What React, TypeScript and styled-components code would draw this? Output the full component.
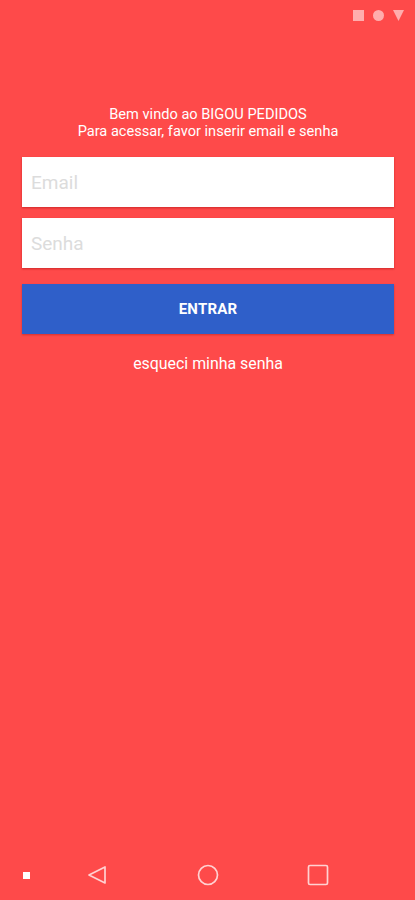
import React, { useState } from "react";
import styled, { createGlobalStyle } from "styled-components";

const GlobalStyle = createGlobalStyle`
  html, body {
    margin: 0;
    padding: 0;
    background: #fe4a4a;
  }
  * {
    box-sizing: border-box;
  }
`;

const Screen = styled.div`
  width: 415px;
  height: 900px;
  background: #fe4a4a;
  display: flex;
  flex-direction: column;
  font-family: Roboto, "Liberation Sans", sans-serif;
`;

const StatusBar = styled.div`
  height: 30px;
  display: flex;
  justify-content: flex-end;
  align-items: center;
  gap: 9px;
  padding: 0 11px 0 0;
`;

const StatusIcon = styled.svg`
  width: 11px;
  height: 11px;
  fill: rgba(255, 255, 255, 0.55);
`;

const Content = styled.div`
  flex: 1;
  display: flex;
  flex-direction: column;
  padding: 76px 21px 0 22px;
`;

const Welcome = styled.p`
  margin: 0 0 17px;
  color: #fff;
  text-align: center;
  font-size: 14.6px;
  line-height: 17px;
`;

const Field = styled.input<{ $gap: number }>`
  width: 100%;
  height: 50px;
  border: none;
  outline: none;
  background: #fff;
  padding: 0 9px;
  font-family: Roboto, "Liberation Sans", sans-serif;
  font-size: 19px;
  color: #333;
  box-shadow: 0 1px 2px rgba(150, 0, 0, 0.45);
  margin-bottom: ${(p) => p.$gap}px;

  &::placeholder {
    color: #dcdcdc;
  }
`;

const Button = styled.button`
  width: 100%;
  height: 50px;
  border: none;
  background: #2f5fc9;
  color: #fff;
  font-family: Roboto, "Liberation Sans", sans-serif;
  font-weight: 700;
  font-size: 15px;
  letter-spacing: 0.2px;
  box-shadow: 0 1px 2px rgba(120, 0, 0, 0.35);
  cursor: pointer;
`;

const Forgot = styled.a`
  margin-top: 20px;
  text-align: center;
  color: #fff;
  font-size: 15.9px;
  line-height: 19px;
  text-decoration: none;
  cursor: pointer;
`;

const NavBar = styled.div`
  height: 50px;
  display: flex;
  align-items: center;
`;

const NavDot = styled.div`
  width: 7px;
  height: 7px;
  background: #fff;
  margin-left: 23px;
  margin-right: 56px;
`;

const NavIcon = styled.svg<{ $mr: number }>`
  width: 22px;
  height: 22px;
  fill: none;
  stroke: rgba(255, 255, 255, 0.75);
  stroke-width: 1.7;
  margin-right: ${(p) => p.$mr}px;
`;

const App: React.FC = () => {
  const [email, setEmail] = useState("");
  const [senha, setSenha] = useState("");

  return (
    <>
      <GlobalStyle />
      <Screen>
        <StatusBar>
          <StatusIcon viewBox="0 0 11 11">
            <rect x="0" y="0" width="11" height="11" />
          </StatusIcon>
          <StatusIcon viewBox="0 0 11 11">
            <circle cx="5.5" cy="5.5" r="5.5" />
          </StatusIcon>
          <StatusIcon viewBox="0 0 11 11">
            <polygon points="0,0 11,0 5.5,11" />
          </StatusIcon>
        </StatusBar>
        <Content>
          <Welcome>
            Bem vindo ao BIGOU PEDIDOS
            <br />
            Para acessar, favor inserir email e senha
          </Welcome>
          <Field
            $gap={11}
            placeholder="Email"
            value={email}
            onChange={(e) => setEmail(e.target.value)}
          />
          <Field
            $gap={16}
            type="password"
            placeholder="Senha"
            value={senha}
            onChange={(e) => setSenha(e.target.value)}
          />
          <Button type="button">ENTRAR</Button>
          <Forgot>esqueci minha senha</Forgot>
        </Content>
        <NavBar>
          <NavDot />
          <NavIcon $mr={88.5} viewBox="0 0 22 22">
            <path d="M19 3 L19 19 L3 11 Z" strokeLinejoin="round" />
          </NavIcon>
          <NavIcon $mr={88.5} viewBox="0 0 22 22">
            <circle cx="11" cy="11" r="9.5" />
          </NavIcon>
          <NavIcon $mr={0} viewBox="0 0 22 22">
            <rect x="1.5" y="1.5" width="19" height="19" rx="1.5" />
          </NavIcon>
        </NavBar>
      </Screen>
    </>
  );
};

export default App;
